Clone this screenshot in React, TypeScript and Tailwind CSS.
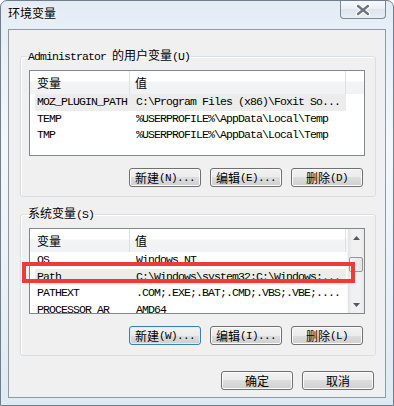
import React from 'react';

type Row = { name: string; value: string; selected?: boolean };

const userVars: Row[] = [
  { name: 'MOZ_PLUGIN_PATH', value: 'C:\\Program Files (x86)\\Foxit So...', selected: true },
  { name: 'TEMP', value: '%USERPROFILE%\\AppData\\Local\\Temp' },
  { name: 'TMP', value: '%USERPROFILE%\\AppData\\Local\\Temp' },
];

const systemVars: Row[] = [
  { name: 'OS', value: 'Windows_NT' },
  { name: 'Path', value: 'C:\\Windows\\system32;C:\\Windows;...', selected: true },
  { name: 'PATHEXT', value: '.COM;.EXE;.BAT;.CMD;.VBS;.VBE;....' },
  { name: 'PROCESSOR_AR', value: 'AMD64' },
];

// CJK glyphs are a bit bigger than the latin ones in this dialog
function Zh({ children }: { children: React.ReactNode }) {
  return (
    <span className="font-['Noto_Sans_CJK_SC',sans-serif] text-[12px] leading-[12px] tracking-normal">
      {children}
    </span>
  );
}

function WinButton({ zh, key2, focused }: { zh: string; key2?: string; focused?: boolean }) {
  return (
    <button
      className={
        'flex h-[19px] w-[72px] items-center justify-center rounded-[3px] border leading-[12px] text-black bg-[linear-gradient(#f2f2f2_0%,#ebebeb_50%,#dddddd_50%,#cfcfcf_100%)] ' +
        (focused
          ? 'border-[#3c7fb1] shadow-[inset_0_0_0_1px_#d8eefa]'
          : 'border-[#707070] shadow-[inset_0_0_0_1px_#fcfcfc]')
      }
    >
      <Zh>{zh}</Zh>
      {key2 && <span className="text-[11px] tracking-[-0.6px]">{key2}</span>}
    </button>
  );
}

function Arrow({ up }: { up?: boolean }) {
  return (
    <div className="flex h-[17px] items-center justify-center">
      <svg width="7" height="4" viewBox="0 0 7 4">
        <polygon points={up ? '3.5,0 7,4 0,4' : '0,0 7,0 3.5,4'} fill="#4e5a66" />
      </svg>
    </div>
  );
}

function VarList({ rows, scroll }: { rows: Row[]; scroll?: boolean }) {
  return (
    <div className="flex h-[86px] overflow-hidden border border-[#828790] bg-white">
      <div className="min-w-0 flex-1">
        <div className="flex h-[23px] bg-[linear-gradient(#ffffff_0%,#ffffff_45%,#f3f4f6_46%,#f1f2f4_100%)]">
          <div className="flex w-[100px] items-center border-r border-[#dde1e6] pl-[7px]">
            <Zh>变量</Zh>
          </div>
          <div className="flex w-[216px] items-center border-r border-[#dde1e6] pl-[5px]">
            <Zh>值</Zh>
          </div>
          <div className="flex-1" />
        </div>
        {rows.map((r) => (
          <div
            key={r.name}
            className={'ml-[5px] flex h-[16.5px] w-[311px] items-center whitespace-nowrap ' + (r.selected ? 'bg-[#ececec]' : '')}
          >
            <div className="w-[101px] overflow-hidden pl-[2px]">{r.name}</div>
            <div className="flex-1 overflow-hidden">{r.value}</div>
          </div>
        ))}
      </div>
      {scroll && (
        <div className="flex w-[17px] flex-col border-l border-[#f7f7f7] bg-[linear-gradient(90deg,#e3e3e3,#f1f1f1_25%,#f1f1f1_80%,#e8e8e8)]">
          <Arrow up />
          <div className="mx-[1px] mt-[11px] h-[15px] rounded-[2px] border border-[#979797] bg-[linear-gradient(90deg,#f5f5f5,#e4e4e4)]" />
          <div className="flex-1" />
          <Arrow />
        </div>
      )}
    </div>
  );
}

export default function App() {
  return (
    <div className="relative h-[406px] w-[394px] overflow-hidden rounded-t-[7px] border border-[#6f7d8c] bg-[linear-gradient(180deg,#e3ecf5_0%,#f4f8fb_35%,#eaf1f7_70%,#dfe9f2_100%)] font-['Liberation_Mono','Noto_Sans_CJK_SC',monospace] text-[11.5px] leading-[12px] tracking-[-0.9px] text-black">
      {/* title bar */}
      <div className="flex h-[28px] items-start justify-between pl-[7px] pr-[7px]">
        <div className="pt-[6px] [text-shadow:0_0_6px_#ffffff]">
          <Zh>环境变量</Zh>
        </div>
        <div className="flex h-[18px] w-[46px] items-center justify-center rounded-b-[4px] border border-t-0 border-[#7c8a99] bg-[linear-gradient(#f7f9fb,#eaeff4_50%,#dde4ec_50%,#e8eef4)]">
          <svg width="16" height="12" viewBox="0 0 16 12">
            <path d="M3 2 L13 10 M13 2 L3 10" stroke="#ffffff" strokeWidth="4.5" strokeLinecap="round" />
            <path d="M3 2 L13 10 M13 2 L3 10" stroke="#6b7580" strokeWidth="2.4" strokeLinecap="round" />
          </svg>
        </div>
      </div>

      {/* client area */}
      <div className="mx-[7px] h-[369px] border border-[#8e9aa6] bg-[#f0f0f0]">
        <fieldset className="ml-[11px] mt-[19px] w-[356px] rounded-[3px] border border-[#d5dfe5] pb-[9px] pl-[8px] pr-[10px] pt-[7px] shadow-[inset_1px_1px_0_#ffffff]">
          <legend className="ml-[-2px] px-[1px] leading-[12px]">
            Administrator <Zh>的用户变量</Zh>(U)
          </legend>
          <VarList rows={userVars} />
          <div className="mt-[12px] flex justify-end gap-[9px] pr-[2px]">
            <WinButton zh="新建" key2="(N)..." />
            <WinButton zh="编辑" key2="(E)..." />
            <WinButton zh="删除" key2="(D)" />
          </div>
        </fieldset>

        <fieldset className="ml-[11px] mt-[10px] w-[356px] rounded-[3px] border border-[#d5dfe5] pb-[10px] pl-[8px] pr-[10px] pt-[7px] shadow-[inset_1px_1px_0_#ffffff]">
          <legend className="ml-[-2px] px-[1px] leading-[12px]">
            <Zh>系统变量</Zh>(S)
          </legend>
          <VarList rows={systemVars} scroll />
          <div className="mt-[12px] flex justify-end gap-[9px] pr-[2px]">
            <WinButton zh="新建" key2="(W)..." focused />
            <WinButton zh="编辑" key2="(I)..." />
            <WinButton zh="删除" key2="(L)" />
          </div>
        </fieldset>

        <div className="mt-[15px] flex justify-end gap-[9px] pr-[11px]">
          <WinButton zh="确定" />
          <WinButton zh="取消" />
        </div>
      </div>

      {/* red annotation box around the Path row */}
      <div className="absolute left-[21px] top-[261px] h-[21px] w-[333px] border-[4px] border-[#ee3a3a]" />
    </div>
  );
}
